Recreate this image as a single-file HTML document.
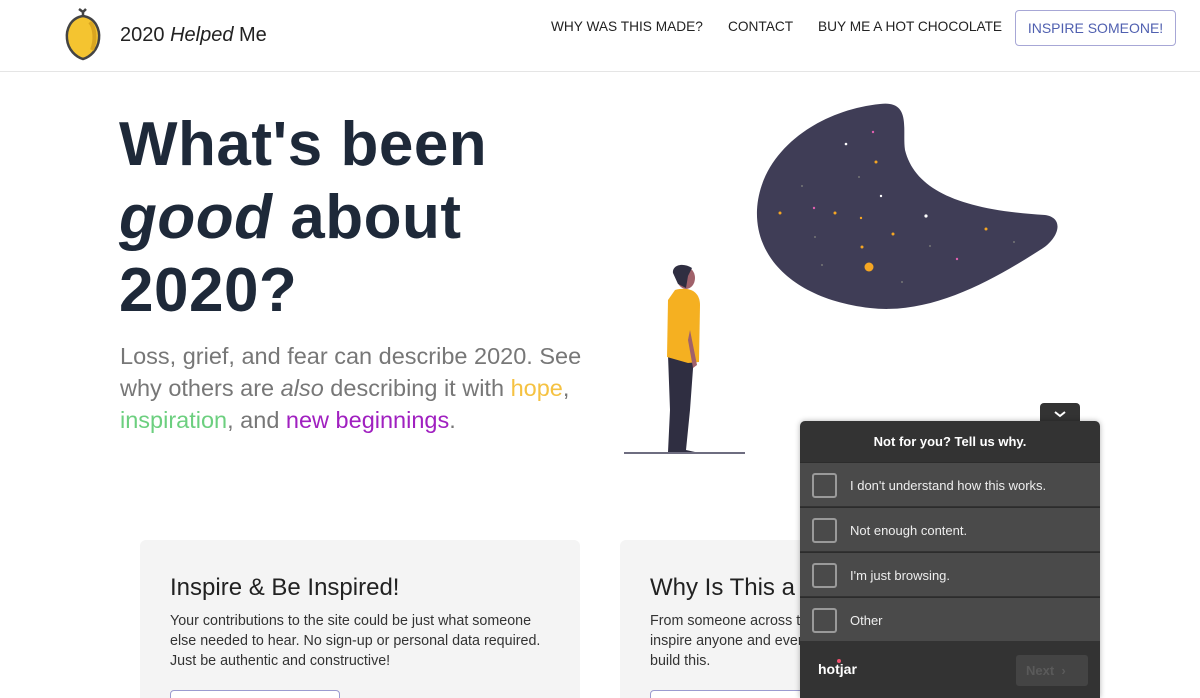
<!DOCTYPE html>
<html><head><meta charset="utf-8"><style>
*{margin:0;padding:0;box-sizing:border-box}
html,body{width:1200px;height:698px;overflow:hidden}
body{background:#fff;font-family:"Liberation Sans",sans-serif;position:relative;color:#1f2937}
.a{position:absolute;white-space:nowrap}
.nav{font-size:13.7px;color:#222;top:19px}
.h1{font-size:62px;font-weight:700;color:#1e2939;left:119px;letter-spacing:0.5px}
.sub{left:120px;font-size:23.5px;color:#777;line-height:32px;top:340px;white-space:normal;width:488px}
.card{position:absolute;background:#f4f4f4;border-radius:6px;top:540px;height:170px}
.card h2{font-weight:400;font-size:24px;color:#222;position:absolute;top:34px;left:30px;white-space:nowrap}
.card p{position:absolute;top:71px;left:30px;font-size:14.3px;line-height:20px;color:#333;width:390px}
.card .b{position:absolute;left:30px;top:150px;width:170px;height:40px;border:1px solid #9b9bd0;border-radius:4px;background:#fff}
.hj{position:absolute;left:800px;top:421px;width:300px;height:277px;background:#333;border-radius:5px 5px 0 0;box-shadow:0 0 6px rgba(0,0,0,.3)}
.row{position:absolute;left:0;width:300px;height:44px;background:#4a4a4a;border-top:1px solid #2c2c2c}
.row .cb{position:absolute;left:12px;top:10px;width:25px;height:25px;border:2px solid #9a9a9a;border-radius:3px}
.row span{position:absolute;left:50px;top:15px;font-size:13px;color:#eee}
</style></head><body>
<div style="position:absolute;left:0;top:71px;width:1200px;height:1px;background:#e5e5e5"></div>
<svg class="a" style="left:62px;top:8px" width="42" height="54" viewBox="0 0 42 54">
<path d="M21 4 L17 1 M21 4 L24 1 M21 4 L21 8" stroke="#444" stroke-width="2.5" fill="none"/>
<path d="M21 8 C8 10 4 22 5 31 C6 42 14 49 21 51 C28 49 36 42 37 31 C38 22 34 10 21 8Z" fill="#f4c430" stroke="#444" stroke-width="2.5"/>
<path d="M28 14 C33 20 34 32 30 42" stroke="#d9a520" stroke-width="4" fill="none"/>
</svg>
<div class="a" style="left:120px;top:24px;font-size:20px;color:#222">2020 <i>Helped</i> Me</div>
<div class="a nav" style="left:551px">WHY WAS THIS MADE?</div>
<div class="a nav" style="left:728px">CONTACT</div>
<div class="a nav" style="left:818px">BUY ME A HOT CHOCOLATE</div>
<div class="a" style="left:1015px;top:10px;width:161px;height:36px;border:1px solid #a7a7d6;border-radius:4px;color:#5060b0;font-size:14px;text-align:center;line-height:34px">INSPIRE SOMEONE!</div>
<div class="a h1" style="top:109px">What's been</div>
<div class="a h1" style="top:182px"><i>good</i> about</div>
<div class="a h1" style="top:255px">2020?</div>
<div class="a sub">Loss, grief, and fear can describe 2020. See why others are <i>also</i> describing it with <span style="color:#f5c242">hope</span>, <span style="color:#6ccf7f">inspiration</span>, and <span style="color:#a020c0">new beginnings</span>.</div>
<svg class="a" style="left:0;top:0" width="1200" height="698">
<path d="M880 104 C912 100 902 130 905 150 C915 190 960 210 1045 215 C1066 218 1058 240 1040 250 C990 282 930 315 870 308 C800 300 755 262 757 210 C760 150 820 110 880 104Z" fill="#3f3d56"/>
<g fill="#f5a623"><circle cx="869" cy="267" r="4.5"/><circle cx="780" cy="213" r="1.5"/><circle cx="835" cy="213" r="1.5"/><circle cx="876" cy="162" r="1.5"/><circle cx="893" cy="234" r="1.5"/><circle cx="862" cy="247" r="1.5"/><circle cx="986" cy="229" r="1.5"/><circle cx="861" cy="218" r="1.2"/></g>
<g fill="#fff"><circle cx="846" cy="144" r="1.3"/><circle cx="926" cy="216" r="1.6"/><circle cx="881" cy="196" r="1.2"/></g>
<g fill="#e060b0"><circle cx="873" cy="132" r="1.2"/><circle cx="814" cy="208" r="1.2"/><circle cx="957" cy="259" r="1.2"/></g>
<g fill="#777"><circle cx="802" cy="186" r="1"/><circle cx="859" cy="177" r="1"/><circle cx="815" cy="237" r="1"/><circle cx="822" cy="265" r="1"/><circle cx="930" cy="246" r="1"/><circle cx="902" cy="282" r="1"/><circle cx="1014" cy="242" r="1"/></g>
<line x1="624" y1="453" x2="745" y2="453" stroke="#3f3d56" stroke-width="1.5"/>
<path d="M668 355 L694 355 L690 410 L686 450 L695 452 L668 452 L670 410Z" fill="#2f2e41"/>
<path d="M675 290 C690 286 700 292 700 305 L699 362 L688 363 L667 357 L668 300Z" fill="#f5b021"/>
<path d="M690 330 L697 365 L693 368 L688 340Z" fill="#a0616a"/>
<ellipse cx="686" cy="278" rx="9" ry="11" fill="#a0616a"/>
<path d="M673 273 C672 265 683 262 692 268 L688 276 L686 288 L678 284Z" fill="#2f2e41"/>
</svg>
<div class="card" style="left:140px;width:440px"><h2>Inspire &amp; Be Inspired!</h2><p>Your contributions to the site could be just what someone else needed to hear. No sign-up or personal data required. Just be authentic and constructive!</p><div class="b"></div></div>
<div class="card" style="left:620px;width:440px"><h2>Why Is This a Thing?</h2><p>From someone across the world, something you share could inspire anyone and everyone. Here's why it was necessary to build this.</p><div class="b"></div></div>
<div class="a" style="left:1040px;top:403px;width:40px;height:22px;background:#333;border-radius:4px 4px 0 0"><svg width="40" height="20"><path d="M15 9 L20 13 L25 9" stroke="#fff" stroke-width="2" fill="none"/></svg></div>
<div class="hj">
<div class="a" style="left:0;width:300px;top:13px;text-align:center;color:#fff;font-weight:700;font-size:13px">Not for you? Tell us why.</div>
<div class="row" style="top:41px"><div class="cb"></div><span>I don't understand how this works.</span></div>
<div class="row" style="top:86px"><div class="cb"></div><span>Not enough content.</span></div>
<div class="row" style="top:131px"><div class="cb"></div><span>I'm just browsing.</span></div>
<div class="row" style="top:176px"><div class="cb"></div><span>Other</span></div>
<div class="a" style="left:18px;top:240px;color:#fff;font-weight:700;font-size:14px">hotjar</div>
<div class="a" style="left:37px;top:238px;width:4px;height:4px;background:#f0506e;border-radius:50%"></div>
<div class="a" style="left:216px;top:234px;width:72px;height:31px;background:#444;border-radius:3px;color:#5a5a5a;font-weight:700;font-size:13px;line-height:31px;padding-left:10px">Next &nbsp;›</div>
</div>
</body></html>
